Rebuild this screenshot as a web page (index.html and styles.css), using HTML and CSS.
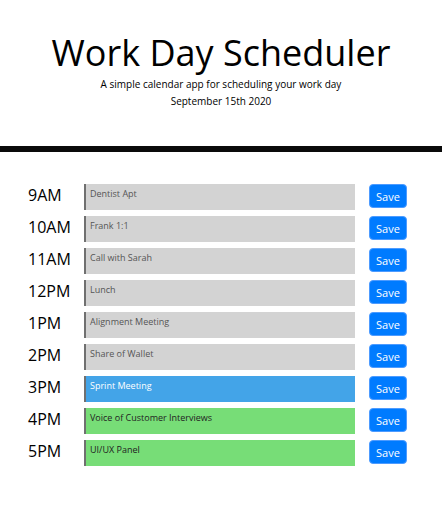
FILE: index.html
```html
<!DOCTYPE html>
<html lang="en">
<head>
<meta charset="utf-8">
<title>Work Day Scheduler</title>
<link rel="stylesheet" href="styles.css">
</head>
<body>
<header class="jumbotron">
  <h1 class="title">Work Day Scheduler</h1>
  <p class="lead">A simple calendar app for scheduling your work day</p>
  <p class="current-day">September 15th 2020</p>
</header>
<main class="schedule">
  <div class="time-block">
    <div class="hour">9AM</div>
    <div class="description past">Dentist Apt</div>
    <button class="save-btn">Save</button>
  </div>
  <div class="time-block">
    <div class="hour">10AM</div>
    <div class="description past">Frank 1:1</div>
    <button class="save-btn">Save</button>
  </div>
  <div class="time-block">
    <div class="hour">11AM</div>
    <div class="description past">Call with Sarah</div>
    <button class="save-btn">Save</button>
  </div>
  <div class="time-block">
    <div class="hour">12PM</div>
    <div class="description past">Lunch</div>
    <button class="save-btn">Save</button>
  </div>
  <div class="time-block">
    <div class="hour">1PM</div>
    <div class="description past">Alignment Meeting</div>
    <button class="save-btn">Save</button>
  </div>
  <div class="time-block">
    <div class="hour">2PM</div>
    <div class="description past">Share of Wallet</div>
    <button class="save-btn">Save</button>
  </div>
  <div class="time-block">
    <div class="hour">3PM</div>
    <div class="description present">Sprint Meeting</div>
    <button class="save-btn">Save</button>
  </div>
  <div class="time-block">
    <div class="hour">4PM</div>
    <div class="description future">Voice of Customer Interviews</div>
    <button class="save-btn">Save</button>
  </div>
  <div class="time-block">
    <div class="hour">5PM</div>
    <div class="description future">UI/UX Panel</div>
    <button class="save-btn">Save</button>
  </div>
</main>
</body>
</html>
```
FILE: styles.css
```css
* { box-sizing: border-box; }

body {
  margin: 0;
  background: #fff;
  font-family: "Open Sans", "Noto Sans", sans-serif;
  color: #000;
}

.jumbotron {
  text-align: center;
  padding-top: 31px;
  padding-bottom: 36px;
  border-bottom: 6px solid #0a0a0a;
}

.title {
  margin: 0;
  font-size: 36px;
  font-weight: 400;
  line-height: 43px;
}

.lead {
  margin: 2px 0 0;
  font-size: 10px;
  line-height: 17px;
}

.current-day {
  margin: 0;
  font-size: 10px;
  line-height: 17px;
}

.schedule {
  padding: 32px 0 0 28px;
  display: flex;
  flex-direction: column;
  gap: 6px;
}

.time-block {
  display: flex;
  align-items: flex-start;
  height: 26px;
}

.hour {
  width: 56px;
  font-size: 16px;
  line-height: 22px;
  color: #000;
}

.description {
  width: 271px;
  height: 26px;
  padding: 3px 4px;
  font-size: 9px;
  line-height: 13px;
  border-left: 2px solid #707070;
}

.past {
  background: #d3d3d3;
  color: #555;
}

.present {
  background: #43a4e8;
  color: #fff;
}

.future {
  background: #77dd77;
  color: #222;
}

.save-btn {
  margin-left: 14px;
  width: 38px;
  height: 24px;
  padding: 0;
  border: 1px solid #4d9bff;
  border-radius: 4px;
  background: #007bff;
  color: #fff;
  font-family: "Open Sans", "Noto Sans", sans-serif;
  font-size: 11px;
}
```
